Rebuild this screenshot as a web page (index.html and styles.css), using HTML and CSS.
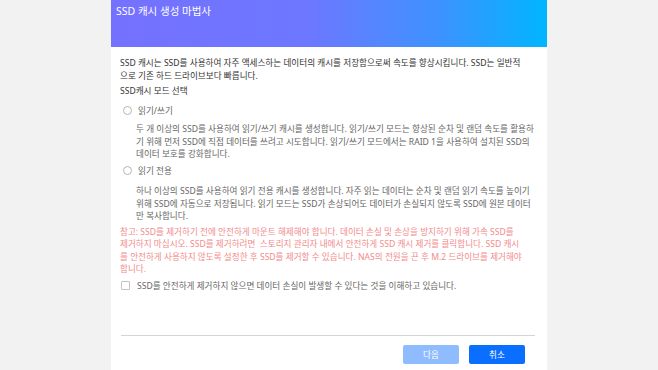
FILE: index.html
```html
<!DOCTYPE html>
<html lang="ko">
    <head>
        <meta charset="UTF-8" />
        <title>SSD 캐시 생성 마법사</title>
        <link rel="stylesheet" href="styles.css">
    </head>
    <body>
        <div class="dialog">
            <div class="header">
                <div class="title">SSD 캐시 생성 마법사</div>
            </div>
            <div class="content">
                <p class="intro">SSD 캐시는 SSD를 사용하여 자주 액세스하는 데이터의 캐시를 저장함으로써 속도를 향상시킵니다. SSD는 일반적으로 기존 하드 드라이브보다 빠릅니다.</p>
                <div class="label">SSD캐시 모드 선택</div>
                <div class="option">
                    <span class="radio"></span>
                    <span>읽기/쓰기</span>
                </div>
                <p class="desc">두 개 이상의 SSD를 사용하여 읽기/쓰기 캐시를 생성합니다. 읽기/쓰기 모드는 향상된 순차 및 랜덤 속도를 활용하기 위해 먼저 SSD에 직접 데이터를 쓰려고 시도합니다. 읽기/쓰기 모드에서는 RAID 1을 사용하여 설치된 SSD의 데이터 보호를 강화합니다.</p>
                <div class="option option-second">
                    <span class="radio"></span>
                    <span>읽기 전용</span>
                </div>
                <p class="desc desc-second">하나 이상의 SSD를 사용하여 읽기 전용 캐시를 생성합니다. 자주 읽는 데이터는 순차 및 랜덤 읽기 속도를 높이기 위해 SSD에 자동으로 저장됩니다. 읽기 모드는 SSD가 손상되어도 데이터가 손실되지 않도록 SSD에 원본 데이터만 복사합니다.</p>
                <p class="note">참고: SSD를 제거하기 전에 안전하게 마운트 해제해야 합니다. 데이터 손실 및 손상을 방지하기 위해 가속 SSD를 제거하지 마십시오. SSD를 제거하려면 &nbsp;스토리지 관리자 내에서 안전하게 SSD 캐시 제거를 클릭합니다. SSD 캐시를 안전하게 사용하지 않도록 설정한 후 SSD를 제거할 수 있습니다. NAS의 전원을 끈 후 M.2 드라이브를 제거해야 합니다.</p>
                <div class="agree">
                    <span class="check"></span>
                    <span>SSD를 안전하게 제거하지 않으면 데이터 손실이 발생할 수 있다는 것을 이해하고 있습니다.</span>
                </div>
            </div>
            <div class="footer">
                <button class="btn btn-next" disabled>다음</button>
                <button class="btn btn-cancel">취소</button>
            </div>
        </div>
    </body>
</html>
```

FILE: styles.css
```css
* {
    margin: 0;
    padding: 0;
    box-sizing: border-box;
}
body {
    background: #f2f2f2;
    font-family: "Noto Sans", "Noto Sans CJK KR", sans-serif;
    font-size: 8.6px;
    line-height: 12.5px;
    color: #333333;
}
.dialog {
    width: 436px;
    height: 370px;
    margin-left: 111px;
    background: #ffffff;
    display: flex;
    flex-direction: column;
}
.header {
    height: 47px;
    padding: 4px 0 0 5px;
    background: linear-gradient(90deg, #7571ff 0%, #6d77ff 45%, #3e92ff 75%, #00b5ff 100%);
}
.title {
    color: #ffffff;
    font-size: 10.5px;
    line-height: 14px;
}
.content {
    margin: 10px 12px 0 9px;
    overflow: hidden;
}
.intro {
    margin-right: 8px;
}
.label {
    margin-top: 3px;
}
.option {
    display: flex;
    align-items: center;
    gap: 6px;
    margin-top: 7px;
    padding-left: 3px;
    color: #666666;
}
.option-second {
    margin-top: 4px;
}
.radio {
    width: 9px;
    height: 9px;
    border: 1px solid #b5b5b5;
    border-radius: 50%;
}
.desc {
    margin: 6px 0 0 16px;
    color: #666666;
}
.desc-second {
    margin-top: 8px;
}
.note {
    margin: 3px 13px 0 0;
    color: #f38a8a;
}
.agree {
    display: flex;
    align-items: center;
    gap: 7px;
    margin-top: 4px;
    padding-left: 1px;
    color: #666666;
}
.check {
    width: 9px;
    height: 9px;
    border: 1px solid #c4c4c4;
    border-radius: 1px;
}
.footer {
    margin: auto 12px 6px 10px;
    padding-top: 9px;
    border-top: 1px solid #d4d4d4;
    display: flex;
    justify-content: flex-end;
    gap: 10px;
    padding-right: 10px;
}
.btn {
    width: 56px;
    height: 19px;
    border: none;
    border-radius: 2px;
    font-family: "Noto Sans", "Noto Sans CJK KR", sans-serif;
    font-size: 8.6px;
    color: #ffffff;
}
.btn-next {
    background: #8fbcff;
}
.btn-cancel {
    background: #0a6eff;
}
```
